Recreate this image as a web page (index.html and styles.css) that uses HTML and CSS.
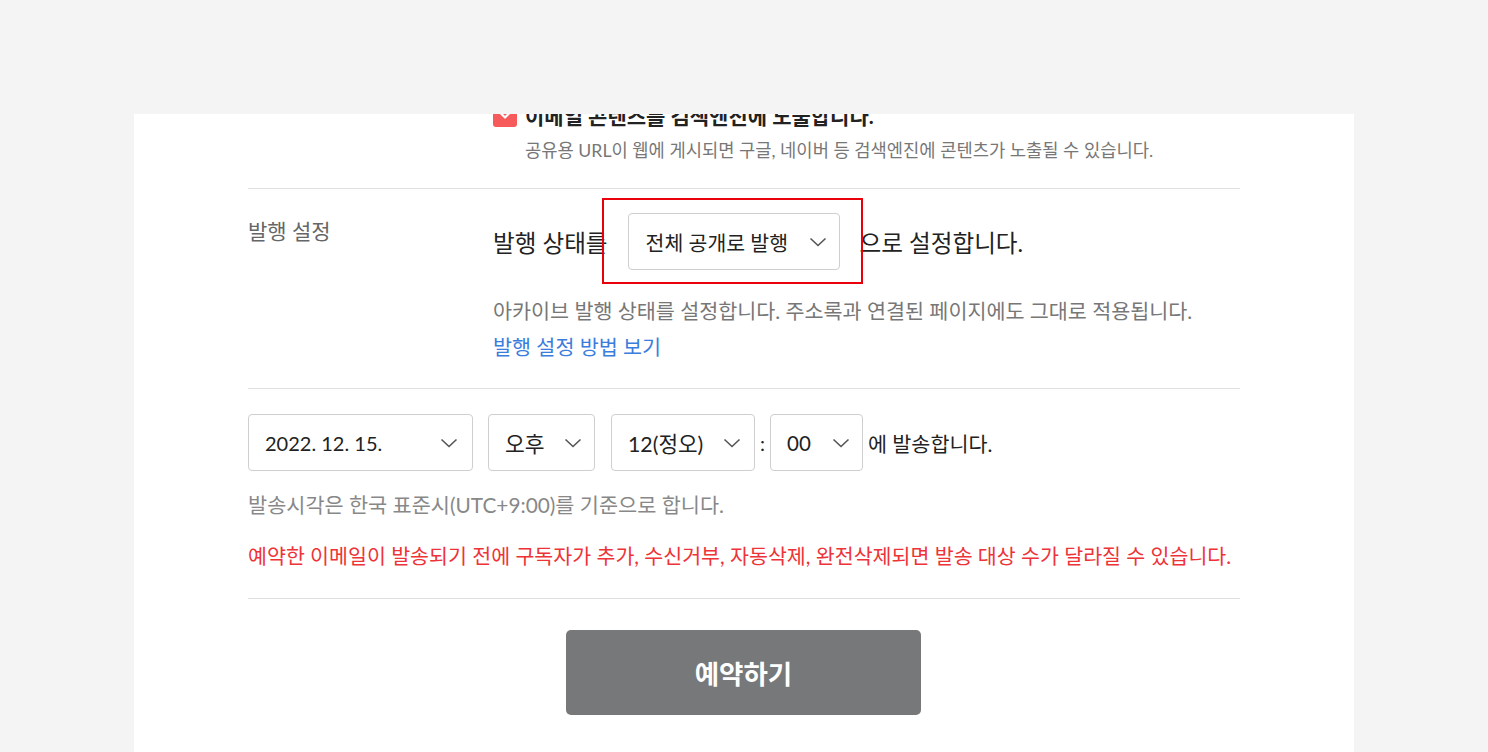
FILE: index.html
```html
<!DOCTYPE html>
<html lang="ko">
<head>
<meta charset="utf-8">
<title>이메일 예약 발송</title>
<link rel="stylesheet" href="styles.css">
</head>
<body>
<div class="topbar"></div>
<main class="page">
  <section class="card">
    <div class="block block-first">
      <div class="check-row">
        <span class="checkbox">
          <svg width="14" height="10" viewBox="0 0 14 10"><path d="M2 2.5 L7 7.5 L12 2.5" fill="none" stroke="#fff" stroke-width="2.2" stroke-linecap="round" stroke-linejoin="round"/></svg>
        </span>
        <span class="check-label">이메일 콘텐츠를 검색엔진에 노출합니다.</span>
      </div>
      <p class="check-desc">공유용 URL이 웹에 게시되면 구글, 네이버 등 검색엔진에 콘텐츠가 노출될 수 있습니다.</p>
    </div>

    <div class="block block-publish">
      <div class="label">발행 설정</div>
      <div class="publish-body">
        <div class="publish-row">
          <span class="lead">발행 상태를</span>
          <div class="highlight-wrap">
            <div class="select select-publish">
              <span>전체 공개로 발행</span>
              <svg class="chev" width="18" height="10" viewBox="0 0 18 10"><path d="M1.5 1.5 L9 8.5 L16.5 1.5" fill="none" stroke="#555" stroke-width="1.6"/></svg>
            </div>
            <div class="highlight"></div>
          </div>
          <span class="lead">으로 설정합니다.</span>
        </div>
        <p class="publish-desc">아카이브 발행 상태를 설정합니다. 주소록과 연결된 페이지에도 그대로 적용됩니다.</p>
        <a class="publish-link" href="#">발행 설정 방법 보기</a>
      </div>
    </div>

    <div class="block block-schedule">
      <div class="schedule-row">
        <div class="select sel-date"><span>2022. 12. 15.</span><svg class="chev" width="18" height="10" viewBox="0 0 18 10"><path d="M1.5 1.5 L9 8.5 L16.5 1.5" fill="none" stroke="#555" stroke-width="1.6"/></svg></div>
        <div class="select sel-ampm"><span>오후</span><svg class="chev" width="18" height="10" viewBox="0 0 18 10"><path d="M1.5 1.5 L9 8.5 L16.5 1.5" fill="none" stroke="#555" stroke-width="1.6"/></svg></div>
        <div class="select sel-hour"><span>12(정오)</span><svg class="chev" width="18" height="10" viewBox="0 0 18 10"><path d="M1.5 1.5 L9 8.5 L16.5 1.5" fill="none" stroke="#555" stroke-width="1.6"/></svg></div>
        <span class="colon">:</span>
        <div class="select sel-min"><span>00</span><svg class="chev" width="18" height="10" viewBox="0 0 18 10"><path d="M1.5 1.5 L9 8.5 L16.5 1.5" fill="none" stroke="#555" stroke-width="1.6"/></svg></div>
        <span class="tail">에 발송합니다.</span>
      </div>
      <p class="note">발송시각은 한국 표준시(UTC+9:00)를 기준으로 합니다.</p>
      <p class="warn">예약한 이메일이 발송되기 전에 구독자가 추가, 수신거부, 자동삭제, 완전삭제되면 발송 대상 수가 달라질 수 있습니다.</p>
    </div>

    <div class="actions">
      <button class="submit" type="button">예약하기</button>
    </div>
  </section>
</main>
</body>
</html>
```

FILE: styles.css
```css
* { box-sizing: border-box; }

html, body {
  margin: 0;
  padding: 0;
  background: #f4f4f4;
  font-family: Lato, "Noto Sans CJK KR", sans-serif;
  color: #222;
  height: 752px;
  overflow: hidden;
}

.topbar {
  position: absolute;
  top: 0;
  left: 0;
  right: 0;
  height: 114px;
  background: #f4f4f4;
  z-index: 5;
}

.page {
  padding-top: 80px;
  display: flex;
  justify-content: center;
}

.card {
  width: 1220px;
  background: #fff;
  padding: 0 114px 40px;
}

.block {
  border-bottom: 1px solid #e0e0e0;
}

.block-first {
  padding: 23px 0 25px 245px;
}

.check-row {
  display: flex;
  align-items: center;
  gap: 8px;
  height: 24px;
}

.checkbox {
  width: 24px;
  height: 24px;
  border-radius: 3px;
  background: #f65a5a;
  display: flex;
  align-items: center;
  justify-content: center;
}

.check-label {
  font-size: 21px;
  font-weight: 700;
  color: #222;
}

.check-desc {
  margin: 12px 0 0 32px;
  font-size: 17.7px;
  line-height: 24px;
  color: #777;
}

.block-publish {
  display: grid;
  grid-template-columns: 245px 1fr;
  padding: 24px 0 23px;
}

.label {
  font-size: 21px;
  line-height: 24px;
  color: #666;
  margin-top: 6px;
}

.publish-row {
  display: flex;
  align-items: center;
  gap: 20px;
}

.lead {
  font-size: 23.6px;
  color: #222;
}

.highlight-wrap {
  position: relative;
}

.highlight {
  position: absolute;
  top: -15px;
  left: -26px;
  right: -23px;
  bottom: -14px;
  border: 2.5px solid #e8000b;
  pointer-events: none;
}

.select {
  height: 57px;
  border: 1px solid #cfcfcf;
  border-radius: 4px;
  background: #fff;
  display: flex;
  align-items: center;
  justify-content: space-between;
  padding: 0 14px 0 16px;
  font-size: 20.5px;
  color: #222;
}

.select-publish {
  width: 212px;
  padding: 0 12px 0 17px;
}

.chev { flex: none; }

.publish-desc {
  margin: 23px 0 0;
  font-size: 20.7px;
  line-height: 36px;
  color: #777;
}

.publish-link {
  display: block;
  font-size: 20.7px;
  line-height: 36px;
  color: #3b7ddd;
  text-decoration: none;
}

.block-schedule {
  padding: 25px 0 29px;
}

.schedule-row {
  display: flex;
  align-items: center;
}

.sel-date { width: 225px; padding-right: 14px; font-size: 20px; }
.sel-ampm { width: 107px; margin-left: 15px; padding-right: 12px; font-size: 21.5px; }
.sel-hour { width: 144px; margin-left: 16px; padding-right: 13px; font-size: 21.3px; }
.sel-min { width: 93px; padding-right: 12px; }

.colon {
  font-size: 20px;
  width: 15px;
  text-align: center;
}

.tail {
  font-size: 20.7px;
  margin-left: 5px;
}

.note {
  margin: 21px 0 0;
  font-size: 20.8px;
  line-height: 26px;
  color: #888;
}

.warn {
  margin: 25px 0 0;
  font-size: 20.6px;
  line-height: 26px;
  color: #ee3338;
}

.actions {
  display: flex;
  justify-content: center;
  padding-top: 31px;
}

.submit {
  width: 355px;
  height: 85px;
  margin-left: -1px;
  border: 0;
  border-radius: 5px;
  background: #76787a;
  color: #fff;
  font-family: Lato, "Noto Sans CJK KR", sans-serif;
  font-size: 26.5px;
  font-weight: 700;
}
```
